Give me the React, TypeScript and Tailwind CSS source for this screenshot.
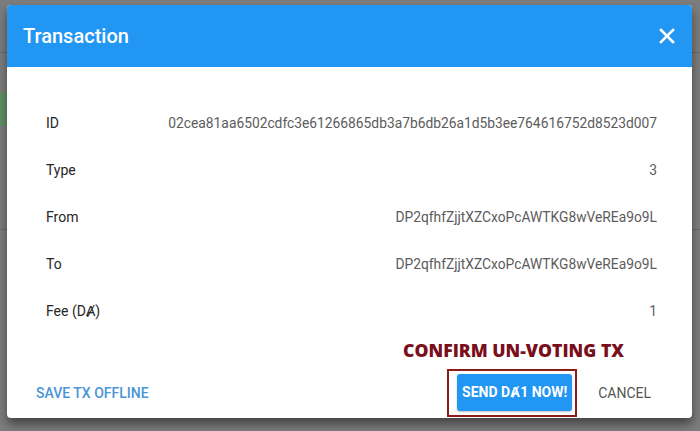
import React from "react";

const rows = [
  { label: "ID", value: "02cea81aa6502cdfc3e61266865db3a7b6db26a1d5b3ee764616752d8523d007" },
  { label: "Type", value: "3" },
  { label: "From", value: "DP2qfhfZjjtXZCxoPcAWTKG8wVeREa9o9L" },
  { label: "To", value: "DP2qfhfZjjtXZCxoPcAWTKG8wVeREa9o9L" },
  { label: "Fee (DȺ)", value: "1" },
];

export default function App() {
  return (
    <div className="relative h-[431px] w-[700px] overflow-hidden bg-[#7c7c7c] font-['Roboto',sans-serif]">
      {/* page behind the overlay */}
      <div className="flex flex-col pt-[52px] text-[13px] text-[#3a3a3a]">
        <div className="h-[40px] border-t border-[#6a6a6a]" />
        <div className="h-[34px] w-[12px] bg-[#5f8f63]" />
        <div className="h-[104px] border-b border-[#6a6a6a]" />
      </div>

      {/* dialog */}
      <div className="absolute left-[7px] top-[5px] flex h-[413px] w-[685px] flex-col overflow-hidden rounded-[4px] bg-white shadow-[0_6px_10px_rgba(0,0,0,0.45)]">
        <div className="flex h-[62px] shrink-0 items-center justify-between bg-[#2196f3] pl-[16px] pr-[17px]">
          <h2 className="text-[20px] font-medium text-white">Transaction</h2>
          <svg width="16" height="16" viewBox="0 0 16 16" className="text-white">
            <path d="M2 2 L14 14 M14 2 L2 14" stroke="currentColor" strokeWidth="2.6" strokeLinecap="square" />
          </svg>
        </div>

        <div className="flex flex-col pl-[39px] pr-[35px] pt-[33px]">
          {rows.map((r) => (
            <div key={r.label} className="flex h-[47px] items-center justify-between">
              <span className="text-[14px] text-[#262626]">{r.label}</span>
              <span className="text-[13.8px] text-[#5c5c5c]">{r.value}</span>
            </div>
          ))}
        </div>

        <div className="mt-[5px] flex justify-end pr-[68px]">
          <span className="font-['Open_Sans',sans-serif] text-[17.6px] font-extrabold leading-[20px] text-[#7a0f1c]">
            CONFIRM UN-VOTING TX
          </span>
        </div>

        <div className="mt-[9px] flex items-center justify-between pl-[29px] pr-[41px]">
          <button className="text-[14px] font-medium text-[#4a95d6]">SAVE TX OFFLINE</button>
          <div className="flex items-center gap-[21px]">
            <div className="border-2 border-[#8a1c1c] pb-[4px] pl-[8px] pr-[3px] pt-[3px]">
              <button className="h-[37px] w-[115px] rounded-[3px] bg-[#2196f3] text-[14px] font-bold text-white shadow-[0_1px_2px_rgba(0,0,0,0.25)]">
                SEND DȺ1 NOW!
              </button>
            </div>
            <button className="text-[14px] text-[#555]">CANCEL</button>
          </div>
        </div>
      </div>
    </div>
  );
}
